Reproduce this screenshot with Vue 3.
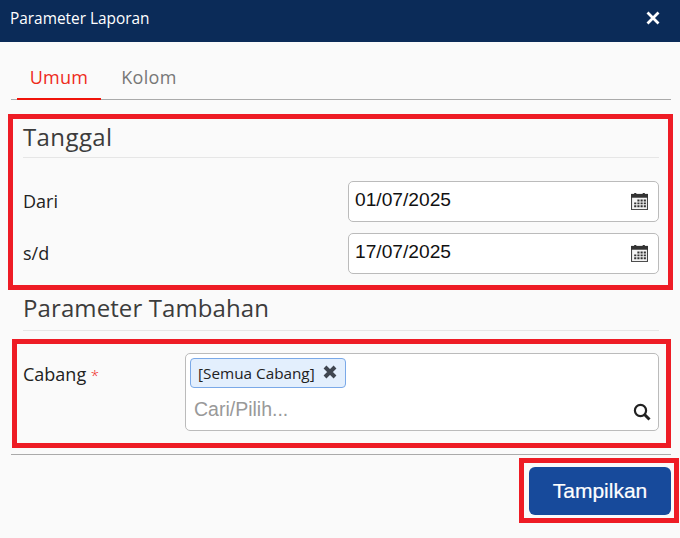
<script setup>
const dates = [
  { label: 'Dari', value: '01/07/2025' },
  { label: 's/d', value: '17/07/2025' },
]
</script>

<template>
  <div class="dialog">
    <header class="titlebar">
      <span class="title">Parameter Laporan</span>
      <svg class="close" width="14" height="14" viewBox="0 0 14 14">
        <path d="M1.5 1.5L12.5 12.5M12.5 1.5L1.5 12.5" stroke="#fff" stroke-width="2.8" fill="none" />
      </svg>
    </header>

    <nav class="tabs">
      <span class="tab active">Umum</span>
      <span class="tab">Kolom</span>
    </nav>

    <section class="mark date-box">
      <h2 class="heading">Tanggal</h2>
      <div class="date-rows">
        <div v-for="d in dates" :key="d.label" class="date-row">
          <label class="label">{{ d.label }}</label>
          <div class="date-input">
            <span class="date-value">{{ d.value }}</span>
            <svg width="17" height="17" viewBox="0 0 16 18" preserveAspectRatio="none">
              <rect x="0.5" y="1.5" width="15" height="16" fill="#f4f4f4" stroke="#444" />
              <rect x="0" y="1" width="16" height="4" fill="#333" />
              <rect x="3" y="0" width="2" height="2" fill="#333" />
              <rect x="11" y="0" width="2" height="2" fill="#333" />
              <path d="M6 7h2v2H6zM9 7h2v2H9zM12 7h2v2h-2zM3 10h2v2H3zM6 10h2v2H6zM9 10h2v2H9zM12 10h2v2h-2zM3 13h2v2H3zM6 13h2v2H6zM9 13h2v2H9zM12 13h2v2h-2z" fill="#333" />
            </svg>
          </div>
        </div>
      </div>
    </section>

    <h2 class="heading extra">Parameter Tambahan</h2>

    <section class="mark branch-box">
      <label class="label branch-label">Cabang <span class="req">*</span></label>
      <div class="picker">
        <span class="chip">
          <span>[Semua Cabang]</span>
          <svg width="16" height="16" viewBox="0 0 16 16">
            <path d="M3 3L13 13M13 3L3 13" stroke="#3f4650" stroke-width="4" fill="none" />
          </svg>
        </span>
        <div class="search-row">
          <span class="placeholder">Cari/Pilih...</span>
          <svg width="18" height="18" viewBox="0 0 18 18">
            <circle cx="7.5" cy="7.5" r="5.6" fill="none" stroke="#222" stroke-width="2.2" />
            <path d="M11.5 11.5L16.5 16.5" stroke="#222" stroke-width="3" fill="none" />
          </svg>
        </div>
      </div>
    </section>

    <footer class="footer">
      <div class="mark action-box">
        <button class="primary" type="button">Tampilkan</button>
      </div>
    </footer>
  </div>
</template>

<style>
body { margin: 0; }
</style>

<style scoped>
.dialog {
  width: 680px;
  height: 538px;
  box-sizing: border-box;
  background: #fafafa;
  display: flex;
  flex-direction: column;
  overflow: hidden;
  font-family: "Open Sans", "Noto Sans", sans-serif;
  color: #222;
}
.titlebar {
  height: 42px;
  flex: none;
  background: #0b2b58;
  color: #fff;
  display: flex;
  align-items: center;
  justify-content: space-between;
  padding: 0 20px 6px 10px;
  box-sizing: border-box;
}
.title { font-size: 15.4px; }
.tabs {
  margin: 15px 9px 0 11px;
  padding-left: 6px;
  height: 43px;
  box-sizing: border-box;
  border-bottom: 1px solid #aaa;
  display: flex;
  gap: 7px;
}
.tab {
  width: 82px;
  height: 38px;
  text-align: center;
  font-size: 18px;
  line-height: 40px;
  letter-spacing: 0.3px;
  color: #777;
}
.tab.active {
  width: 84px;
  height: 43px;
  box-sizing: border-box;
  color: #ee2a1c;
  border-bottom: 2px solid #f0140a;
}
.mark {
  border: 5px solid #ee1c25;
  box-sizing: border-box;
}
.date-box {
  margin: 14px 7px 0 8px;
  height: 176px;
  padding: 0 9px 0 10px;
}
.heading {
  margin: 0;
  font-weight: 400;
  font-size: 24px;
  letter-spacing: 0.1px;
  line-height: 36px;
  height: 38px;
  color: #3c3c3c;
  border-bottom: 1px solid #e6e6e6;
  box-sizing: content-box;
}
.date-box .heading { letter-spacing: 0.4px; }
.date-rows {
  margin-top: 23px;
  display: flex;
  flex-direction: column;
  gap: 11px;
}
.date-row {
  display: flex;
  align-items: center;
  justify-content: space-between;
}
.label { font-size: 18px; color: #222; margin-top: -2px; }
.date-input {
  width: 311px;
  height: 41px;
  box-sizing: border-box;
  border: 1px solid #bbb;
  border-radius: 5px;
  background: #fff;
  display: flex;
  align-items: center;
  justify-content: space-between;
  padding: 0 10px 0 6px;
}
.date-value {
  font-family: "Liberation Sans", Arial, sans-serif;
  font-size: 19.2px;
  color: #111;
  margin-top: -3px;
}
.extra {
  margin: 0 21px 0 23px;
  height: 40px;
  line-height: 36px;
}
.branch-box {
  margin: 8px 9px 0 12px;
  height: 109px;
  padding: 9px 7px 0 6px;
  display: flex;
}
.branch-label {
  width: 162px;
  flex: none;
  margin-top: 0;
  line-height: 42px;
}
.req { color: #f02020; font-size: 15px; font-weight: 300; }
.picker {
  flex: 1;
  height: 78px;
  box-sizing: border-box;
  background: #fff;
  border: 1px solid #bbb;
  border-radius: 5px;
  padding: 4px 4px 0;
  display: flex;
  flex-direction: column;
  align-items: flex-start;
}
.chip {
  width: 156px;
  height: 30px;
  box-sizing: border-box;
  background: #e3effd;
  border: 1px solid #7aa9e8;
  border-radius: 4px;
  display: flex;
  align-items: center;
  gap: 7px;
  padding-left: 7px;
  font-size: 15.3px;
  color: #222;
  white-space: nowrap;
}
.chip svg { margin-top: -2px; }
.search-row {
  width: 100%;
  display: flex;
  justify-content: space-between;
  align-items: center;
  margin-top: 10px;
  padding: 0 0 0 4px;
  box-sizing: border-box;
}
.search-row svg { margin-top: 4px; margin-right: 3px; }
.placeholder {
  font-family: "Liberation Sans", Arial, sans-serif;
  font-size: 19.5px;
  color: #999;
}
.footer {
  margin: 6px 9px 0 11px;
  border-top: 1px solid #aaa;
  display: flex;
  justify-content: flex-end;
  height: 70px;
}
.action-box {
  width: 160px;
  height: 65px;
  margin: 3px -8px 0 0;
  padding: 4px 0 0 5px;
}
.primary {
  width: 142px;
  height: 48px;
  border: 0;
  border-radius: 6px;
  background: #174a9b;
  color: #fff;
  font-family: "Liberation Sans", Arial, sans-serif;
  font-weight: 400;
  font-size: 21px;
  -webkit-text-stroke: 0.2px #fff;
}
</style>
